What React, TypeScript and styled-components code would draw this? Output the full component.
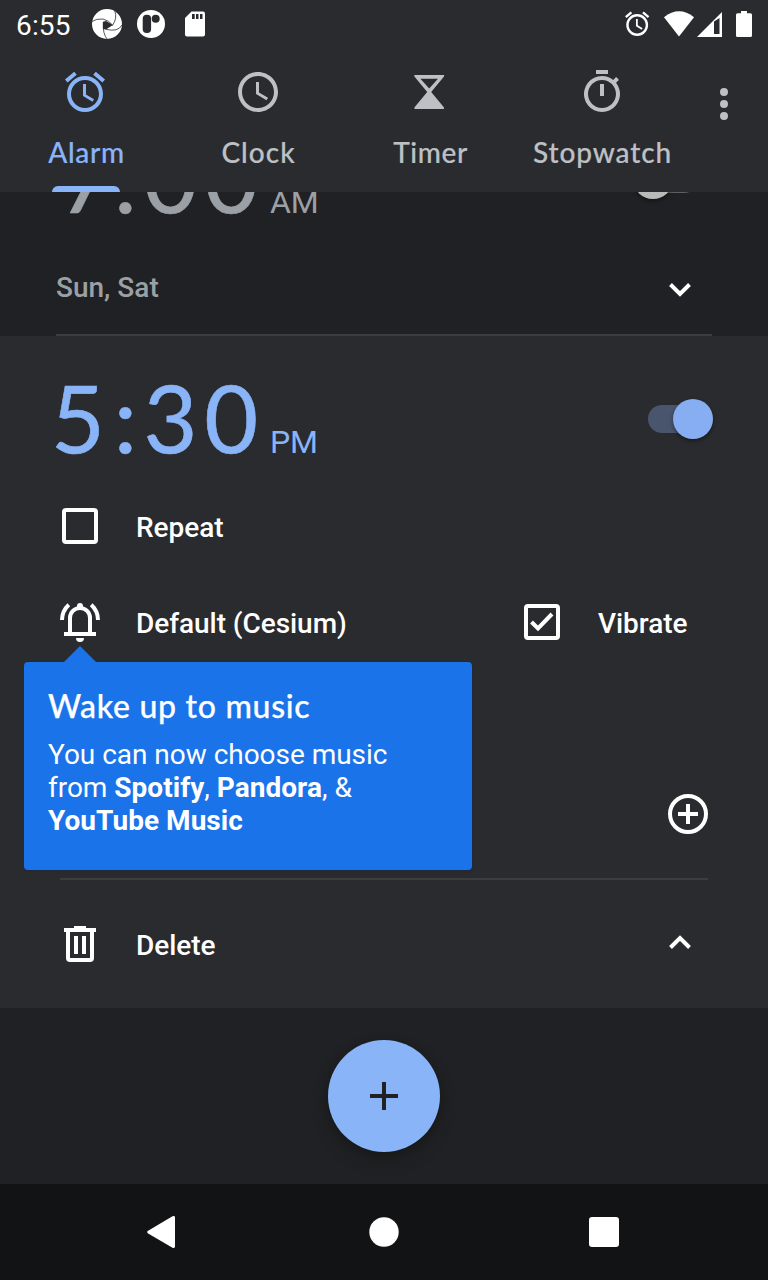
import React from "react";
import styled, { createGlobalStyle } from "styled-components";

const c = {
  surface: "#2a2b2e",
  background: "#202124",
  nav: "#121315",
  accent: "#8ab4f8",
  muted: "#bdc1c6",
  disabled: "#9aa0a6",
  line: "#3c3d40",
  tip: "#1a73e8",
};

const Global = createGlobalStyle`
  * { box-sizing: border-box; }
  body { margin: 0; background: ${c.background}; }
  svg { display: block; flex: none; }
`;

const Screen = styled.div`
  width: 768px;
  height: 1280px;
  display: flex;
  flex-direction: column;
  overflow: hidden;
  background: ${c.background};
  color: #fff;
  font-family: Roboto, sans-serif;
`;

const StatusBar = styled.div`
  height: 48px;
  flex: none;
  display: flex;
  align-items: center;
  padding: 0 16px;
  background: ${c.surface};
`;

const StatusTime = styled.span`
  width: 76px;
  font-size: 28px;
  line-height: 46px;
  padding-top: 4px;
  letter-spacing: 0.15px;
`;

const StatusSpacer = styled.div`
  flex: 1;
`;

const TabBar = styled.div`
  height: 144px;
  flex: none;
  display: flex;
  background: ${c.surface};
`;

const Tab = styled.div<{ $active?: boolean }>`
  width: 172px;
  display: flex;
  flex-direction: column;
  align-items: center;
  padding-top: 20px;
  color: ${(p) => (p.$active ? c.accent : c.muted)};
`;

const TabIcon = styled.div<{ $nudge?: number }>`
  margin-right: ${(p) => p.$nudge ?? 0}px;
`;

const TabLabel = styled.span<{ $tracking: number }>`
  margin-top: 19px;
  margin-left: 1px;
  height: 34px;
  font: 500 28px/34px Lato, sans-serif;
  -webkit-text-stroke: 0.2px currentColor;
  letter-spacing: ${(p) => p.$tracking}px;
`;

const Indicator = styled.div`
  width: 68px;
  height: 6px;
  margin-top: 17px;
  border-radius: 6px 6px 0 0;
  background: ${c.accent};
`;

const More = styled.div`
  padding: 32px 0 0 12px;
  color: ${c.muted};
`;

const List = styled.div`
  height: 816px;
  flex: none;
  overflow: hidden;
  display: flex;
  flex-direction: column;
  justify-content: flex-end;
`;

const Card = styled.section<{ $expanded?: boolean }>`
  height: ${(p) => (p.$expanded ? 672 : 240)}px;
  flex: none;
  display: flex;
  flex-direction: column;
  background: ${(p) => (p.$expanded ? c.surface : c.background)};
`;

const TimeRow = styled.div`
  height: 142px;
  flex: none;
  display: flex;
  justify-content: space-between;
  padding: 23px 55px 0 53px;
`;

const Time = styled.div<{ $on?: boolean }>`
  display: flex;
  align-items: baseline;
  height: 116px;
  color: ${(p) => (p.$on ? c.accent : c.disabled)};
`;

const Digits = styled.span`
  font: 400 93px/116px Lato, sans-serif;
  -webkit-text-stroke: 0.6px currentColor;
  letter-spacing: 6.7px;
`;

const Hour = styled.span<{ $shift: number }>`
  margin-left: ${(p) => p.$shift}px;
  margin-right: ${(p) => -p.$shift}px;
`;

const Meridiem = styled.span`
  font-size: 32px;
  margin-left: 5px;
`;

const Track = styled.div<{ $on?: boolean }>`
  width: 50px;
  height: 28px;
  margin: 46px 15px 0 0;
  border-radius: 14px;
  display: flex;
  align-items: center;
  background: ${(p) => (p.$on ? "#48556d" : "#5f6063")};
`;

const Thumb = styled.div<{ $on?: boolean }>`
  width: 40px;
  height: 40px;
  flex: none;
  border-radius: 50%;
  margin-left: ${(p) => (p.$on ? 25 : -15)}px;
  background: ${(p) => (p.$on ? "#87aef2" : "#b9b9b9")};
  box-shadow: 0 2px 4px rgba(0, 0, 0, 0.4);
`;

const DaysRow = styled.div`
  height: 96px;
  display: flex;
  align-items: center;
  justify-content: space-between;
  padding: 4px 64px 0 56px;
  color: ${c.disabled};
`;

const Divider = styled.div<{ $inset: number }>`
  height: 2px;
  flex: none;
  margin: 0 ${(p) => p.$inset}px;
  background: ${c.line};
`;

const OptionRow = styled.div`
  height: 96px;
  flex: none;
  display: flex;
  align-items: center;
  padding: 0 56px;
`;

const RoutineRow = styled(OptionRow)`
  margin: 96px 0 16px;
  justify-content: flex-end;
`;

const DeleteRow = styled(OptionRow)`
  height: 128px;
  padding-right: 64px;
`;

const Label = styled.span<{ $wide?: number }>`
  width: ${(p) => (p.$wide ? p.$wide + "px" : "auto")};
  padding-top: 3px;
  font-size: 28px;
  font-weight: 500;
  line-height: 34px;
  letter-spacing: -0.05px;
  white-space: nowrap;
`;

const Days = styled(Label)`
  padding: 0 0 1px;
  letter-spacing: 0;
`;

const IconSlot = styled.div<{ $gap: number }>`
  margin-right: ${(p) => p.$gap}px;
`;

const Push = styled.div`
  margin-left: auto;
`;

const RingtoneRow = styled(OptionRow)`
  position: relative;
`;

const Tooltip = styled.aside`
  position: absolute;
  z-index: 2;
  left: 24px;
  top: 88px;
  width: 448px;
  height: 208px;
  padding: 24px;
  border-radius: 4px;
  background: ${c.tip};
  box-shadow: 1px 1px 2px rgba(20, 40, 80, 0.5);
  &::before {
    content: "";
    position: absolute;
    left: 40px;
    top: -16px;
    border: 16px solid transparent;
    border-top: 0;
    border-bottom-color: ${c.tip};
  }
`;

const TipTitle = styled.h2`
  margin: 0;
  font: 500 32px/40px Lato, sans-serif;
  -webkit-text-stroke: 0.25px currentColor;
  letter-spacing: 0.7px;
`;

const TipText = styled.p`
  margin: 12px 0 0;
  font-size: 28px;
  line-height: 33px;
  letter-spacing: -0.03px;
  white-space: nowrap;
  b { font-weight: 700; letter-spacing: 0.04px; }
`;

const Footer = styled.div`
  height: 176px;
  flex: none;
  display: flex;
  justify-content: center;
  align-items: center;
`;

const Fab = styled.div`
  width: 112px;
  height: 112px;
  border-radius: 50%;
  display: flex;
  align-items: center;
  justify-content: center;
  background: ${c.accent};
  box-shadow: 0 8px 16px rgba(20, 20, 18, 0.4), 0 2px 6px rgba(20, 20, 18, 0.3);
`;

const NavBar = styled.nav`
  height: 96px;
  flex: none;
  display: flex;
  justify-content: space-between;
  align-items: center;
  padding: 0 136px;
  background: ${c.nav};
`;

const Glyph = ({ d }: { d: string }) => (
  <svg width="48" height="48" viewBox="0 0 24 24" fill="currentColor">
    <path d={d} />
  </svg>
);

const alarmPath =
  "M22 5.72l-4.6-3.86-1.29 1.53 4.6 3.86L22 5.72zM7.88 3.39L6.6 1.86 2 5.71l1.29 1.53 4.59-3.85zM12.5 8H11v6l4.75 2.85.75-1.23-4-2.37V8zM12 4a9 9 0 1 0 0 18 9 9 0 0 0 0-18zm0 16c-3.87 0-7-3.13-7-7s3.13-7 7-7 7 3.13 7 7-3.13 7-7 7z";
const clockPath =
  "M11.99 2C6.47 2 2 6.48 2 12s4.47 10 9.99 10C17.52 22 22 17.52 22 12S17.52 2 11.99 2zM12 20c-4.42 0-8-3.58-8-8s3.58-8 8-8 8 3.58 8 8-3.58 8-8 8zm.5-13H11v6l5.25 3.15.75-1.23-4.5-2.67z";
const timerPath =
  "M4.3 3.5h14.6q.5.4 0 .9L12.6 12l6.3 7.6q.5.9-.2.9H4.500q-.7 0-.2-.9L10.600 12 4.300 4.400q-.5-.5 0-.9zM7.200 5.400l4.400 4.900L16 5.400z";
const stopwatchPath =
  "M15 1H9v2h6V1zm-4 13h2V8h-2v6zm8.03-6.61l1.42-1.42c-.43-.51-.9-.99-1.41-1.41l-1.42 1.42A8.96 8.96 0 0 0 12 4a9 9 0 1 0 7.03 3.39zM12 20c-3.87 0-7-3.13-7-7s3.13-7 7-7 7 3.13 7 7-3.13 7-7 7z";
const morePath =
  "M12 8a2 2 0 1 0 0-4 2 2 0 0 0 0 4zm0 2a2 2 0 1 0 0 4 2 2 0 0 0 0-4zm0 6a2 2 0 1 0 0 4 2 2 0 0 0 0-4z";

const StatusLeftIcons = () => (
  <svg width="120" height="48" viewBox="92 0 120 48">
    <circle cx="107" cy="24" r="15" fill="#fff" />
    <g stroke={c.surface} strokeWidth="0.8" fill="none">
      <path d="M92 21.500Q96 18.500 103 19Q109 20.500 112.500 25" />
      <path d="M114.800 11Q117.500 18 112.500 25.500" />
      <path d="M122 25Q118 32.500 105.500 29.200" />
      <path d="M107.500 39.500Q102.500 34 103.300 22" />
    </g>
    <path d="M103 21.700l3-.6 6.900 4-7 4.400-2.900-.4z" fill={c.surface} />
    <circle cx="151" cy="24" r="14" fill="#fff" />
    <rect x="142.700" y="14.700" width="8.400" height="18.300" rx="4" fill={c.surface} />
    <circle cx="155.700" cy="18.800" r="4" fill={c.surface} />
    <path d="M191.500 11.500H203a2 2 0 0 1 2 2v21a2 2 0 0 1-2 2h-16a2 2 0 0 1-2-2V18z" fill="#fff" />
    <path d="M192 14h2.700v5H192zm4 0h2.500v5H196zm4 0h2.500v5H200z" fill={c.surface} />
  </svg>
);

const StatusRightIcons = () => (
  <svg width="128" height="48" viewBox="624 0 128 48" fill="#fff">
    <g transform="translate(622.600 9.200) scale(1.215)">
      <path d={alarmPath} />
    </g>
    <path d="M679 36.500L664 17.200Q679 5.500 694 17.200z" />
    <path d="M697 37L722 12v25z" />
    <path d="M714 21.500l5.500-3.500v16H714z" fill={c.surface} />
    <path d="M741 11h6v2.300h3.500q1.500 0 1.500 1.500v20.700q0 1.500-1.500 1.500h-13q-1.500 0-1.500-1.500V14.800q0-1.500 1.500-1.500h3.500z" />
  </svg>
);

const Chevron = ({ up }: { up?: boolean }) => (
  <svg width="48" height="48" fill="none" stroke="#fff" strokeWidth="4">
    <path d={up ? "M14.500 27.500L24 18l9.500 9.500" : "M14.500 20.500L24 30l9.500-9.500"} />
  </svg>
);

const Checkbox = ({ checked }: { checked?: boolean }) => (
  <svg width="48" height="48" fill="none" stroke="#fff" strokeWidth="4">
    <rect x="8" y="8" width="32" height="32" rx="2" />
    {checked && <path d="M13.500 24l6.500 6.500 14-14.500" />}
  </svg>
);

const Bell = () => (
  <svg width="48" height="48" fill="none" stroke="#fff" strokeWidth="4">
    <path d="M14 36V20a10 10 0 0 1 20 0v16" />
    <path d="M8 36h32" />
    <path d="M12.800 6.700Q6 13 6 22M35.200 6.700Q42 13 42 22" />
    <path d="M21 10V8a3 3 0 0 1 6 0v2zM20 40h8a4 4 0 0 1-8 0z" fill="#fff" stroke="none" />
  </svg>
);

const Trash = () => (
  <svg width="48" height="48" fill="none" stroke="#fff" strokeWidth="4">
    <path d="M8 10h32M18 8h12M12 10v28q0 2 2 2h20q2 0 2-2V10M20 16v18M28 16v18" />
  </svg>
);

type AlarmTimeProps = { hour: string; minutes: string; half: string; shift: number; on?: boolean };

const AlarmTime = ({ hour, minutes, half, shift, on }: AlarmTimeProps) => (
  <TimeRow>
    <Time $on={on}>
      <Digits>
        <Hour $shift={shift}>{hour}</Hour>:{minutes}
      </Digits>
      <Meridiem>{half}</Meridiem>
    </Time>
    <Track $on={on}>
      <Thumb $on={on} />
    </Track>
  </TimeRow>
);

const tabs = [
  { label: "Alarm", icon: alarmPath, tracking: 0.7, nudge: 2 },
  { label: "Clock", icon: clockPath, tracking: 1 },
  { label: "Timer", icon: timerPath, tracking: 0.6 },
  { label: "Stopwatch", icon: stopwatchPath, tracking: 0.9 },
];

export default function App() {
  return (
    <Screen>
      <Global />
      <StatusBar>
        <StatusTime>6:55</StatusTime>
        <StatusLeftIcons />
        <StatusSpacer />
        <StatusRightIcons />
      </StatusBar>
      <TabBar>
        {tabs.map((t, i) => (
          <Tab key={t.label} $active={i === 0}>
            <TabIcon $nudge={t.nudge}>
              <Glyph d={t.icon} />
            </TabIcon>
            <TabLabel $tracking={t.tracking}>{t.label}</TabLabel>
            {i === 0 && <Indicator />}
          </Tab>
        ))}
        <More>
          <Glyph d={morePath} />
        </More>
      </TabBar>
      <List>
        <Card>
          <AlarmTime hour="7" minutes="00" half="AM" shift={6} />
          <DaysRow>
            <Days>Sun, Sat</Days>
            <Chevron />
          </DaysRow>
          <Divider $inset={56} />
        </Card>
        <Card $expanded>
          <AlarmTime hour="5" minutes="30" half="PM" shift={-2} on />
          <OptionRow>
            <IconSlot $gap={32}>
              <Checkbox />
            </IconSlot>
            <Label>Repeat</Label>
          </OptionRow>
          <RingtoneRow>
            <IconSlot $gap={32}>
              <Bell />
            </IconSlot>
            <Label $wide={382}>Default (Cesium)</Label>
            <IconSlot $gap={32}>
              <Checkbox checked />
            </IconSlot>
            <Label>Vibrate</Label>
            <Tooltip>
              <TipTitle>Wake up to music</TipTitle>
              <TipText>
                You can now choose music
                <br />
                from <b>Spotify</b>, <b>Pandora</b>, &amp;
                <br />
                <b>YouTube Music</b>
              </TipText>
            </Tooltip>
          </RingtoneRow>
          <RoutineRow>
            <svg width="48" height="48" fill="none" stroke="#fff" strokeWidth="4">
              <circle cx="24" cy="24" r="18" />
              <path d="M14 24h20M24 14v20" />
            </svg>
          </RoutineRow>
          <Divider $inset={60} />
          <DeleteRow>
            <IconSlot $gap={32}>
              <Trash />
            </IconSlot>
            <Label>Delete</Label>
            <Push>
              <Chevron up />
            </Push>
          </DeleteRow>
        </Card>
      </List>
      <Footer>
        <Fab>
          <svg width="48" height="48" stroke="#202124" strokeWidth="4">
            <path d="M10 24h28M24 10v28" />
          </svg>
        </Fab>
      </Footer>
      <NavBar>
        <svg width="48" height="48" fill="#fff">
          <path d="M11.700 23Q10.500 24 11.700 25.200L36.500 39.700Q39 40.500 39 38.500V9.500Q39 7.500 36.500 8.300z" />
        </svg>
        <svg width="48" height="48" fill="#fff">
          <circle cx="24" cy="24" r="14.700" />
        </svg>
        <svg width="48" height="48" fill="#fff">
          <rect x="5" y="9" width="30" height="30" rx="3" />
        </svg>
      </NavBar>
    </Screen>
  );
}
